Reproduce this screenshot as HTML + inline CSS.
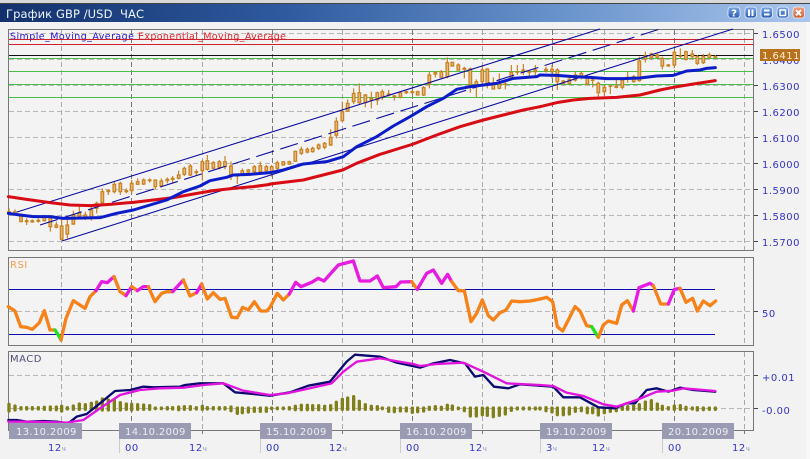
<!DOCTYPE html>
<html><head><meta charset="utf-8"><style>
html,body{margin:0;padding:0;background:#f2f2f2;width:810px;height:459px;overflow:hidden}
svg{display:block}
text{font-family:"DejaVu Sans","Noto Sans CJK SC",sans-serif}
.ax{font-size:10px;fill:#3434c8;letter-spacing:.5px}
.dt{font-size:10px;fill:#eeeef4;letter-spacing:.35px}
.ch{font-size:7px;fill:#8a8ad0}
.w{fill:none;stroke:#c8801e;stroke-width:3.5}
.b{fill:#e6b676;stroke:#c8801e;stroke-width:3.5}
.l{fill:none;stroke-linejoin:round;stroke-linecap:round}
.o{stroke:#f5831a;stroke-width:10}.m{stroke:#e81ce0;stroke-width:10}.g{stroke:#20e020;stroke-width:10}
.h{fill:none;stroke:#80801a;stroke-width:10;stroke-linecap:round}
.gv{stroke-width:1;stroke-dasharray:5 3}
</style></head><body>
<svg width="810" height="459" viewBox="0 0 810 459" xmlns="http://www.w3.org/2000/svg">
<defs>
<linearGradient id="tb" x1="0" x2="1" y1="0" y2="0"><stop offset="0" stop-color="#12316c"/><stop offset=".35" stop-color="#2f5a9e"/><stop offset=".7" stop-color="#6a94cc"/><stop offset="1" stop-color="#aac6ec"/></linearGradient>
<linearGradient id="bb" x1="0" x2="0" y1="0" y2="1"><stop offset="0" stop-color="#7aa6e6"/><stop offset="1" stop-color="#2a5cb0"/></linearGradient>
<linearGradient id="br" x1="0" x2="0" y1="0" y2="1"><stop offset="0" stop-color="#f0a080"/><stop offset="1" stop-color="#d05a30"/></linearGradient>
</defs>
<rect width="810" height="459" fill="#f2f2f2"/>
<rect width="810" height="3" fill="#d8d8d8"/>
<rect y="3" width="810" height="1" fill="#444"/>
<rect y="4" width="810" height="18" fill="url(#tb)"/>
<text x="6" y="18" font-size="11.5" fill="#f0f4fa" textLength="138" xml:space="preserve">График GBP /USD  ЧАС</text>
<rect x="806" y="22" width="4" height="437" fill="#f8f8f8"/>
<g stroke="#e8f0ff" stroke-width=".8">
<rect x="728" y="7" width="12" height="11" rx="3" fill="url(#bb)"/><rect x="745" y="7" width="11.500" height="11" rx="3" fill="url(#bb)"/><rect x="761" y="7" width="11.500" height="11" rx="3" fill="url(#bb)"/><rect x="777" y="7" width="11.500" height="11" rx="3" fill="url(#bb)"/><rect x="793" y="7" width="11.500" height="11" rx="3" fill="url(#br)"/>
</g>
<text x="734" y="16.500" font-size="10" font-weight="bold" fill="#fff" text-anchor="middle">?</text>
<path d="M749 9.500v6.500M752.500 9.500v6.500M764 10.500h5.500M764 14.500h5.500M796 10l5 5.500M801 10l-5 5.500" stroke="#fff" stroke-width="2" fill="none"/>
<rect x="780" y="10" width="5.500" height="5.500" fill="none" stroke="#fff" stroke-width="1.500"/>

<!-- panels -->
<rect x="8.500" y="29.500" width="745" height="221" fill="#f3f3f3" stroke="#777"/>
<rect x="8.500" y="257.500" width="745" height="88" fill="#f3f3f3" stroke="#777"/>
<rect x="8.500" y="351.500" width="745" height="79" fill="#f3f3f3" stroke="#777"/>

<!-- grid -->
<g stroke="#b8b8b8" stroke-dasharray="5 3">
<path d="M9 33.500H753M9 59.500H753M9 85.500H753M9 111.500H753M9 137.500H753M9 163.500H753M9 189.500H753M9 215.500H753M9 241.500H753M9 311.500H753M9 375.500H753M9 408.500H753"/>
</g>
<g stroke="#aaa" class="gv"><path d="M61.500 30V250M202.500 30V250M342.500 30V250M482.500 30V250M604.500 30V250M744.500 30V250M61.500 258V345M202.500 258V345M342.500 258V345M482.500 258V345M604.500 258V345M744.500 258V345M61.500 352V430M202.500 352V430M342.500 352V430M482.500 352V430M604.500 352V430M744.500 352V430"/></g>
<g stroke="#777" class="gv"><path d="M131.500 30V250M272.500 30V250M412.500 30V250M552.500 30V250M674.500 30V250M131.500 258V345M272.500 258V345M412.500 258V345M552.500 258V345M674.500 258V345M131.500 352V430M272.500 352V430M412.500 352V430M552.500 352V430M674.500 352V430"/></g>

<text x="10" y="39.500" font-size="9.500" fill="#2a14d0" textLength="124">Simple_Moving_Average</text>
<text x="138" y="39.500" font-size="9.500" fill="#e0242c" textLength="148">Exponential_Moving_Average</text>

<!-- level lines -->
<rect x="9" y="39" width="744" height="1" fill="#d0202c"/>
<rect x="9" y="44" width="744" height="1" fill="#d0202c"/>
<rect x="9" y="58" width="744" height="1" fill="#48c048"/>
<rect x="9" y="71" width="744" height="1" fill="#48c048"/>
<rect x="9" y="84" width="744" height="1" fill="#48c048"/>
<rect x="9" y="97" width="744" height="1" fill="#48c048"/>
<rect x="9" y="55" width="744" height="1" fill="#111"/>

<!-- candles z4 -->
<g transform="translate(0,150) scale(.33333)">
<path class="w" d="M27 175V195M45 178V195M63 190V215M80 205V225M97 208V218M115 205V218M133 195V215M151 198V245M169 215V235M185 205V272M202 205V265M220 182V225M238 170V205M256 185V210M274 170V212M290 155V190M307 115V165M325 118V135M343 95V130M361 95V135M379 115V130M395 90V132M413 85V105M431 85V105M449 85V98M466 90V118M484 85V112M502 82V100M518 78V98M536 62V88M553 50V78M571 42V78M589 58V78M607 30V92M622 15V62M640 33V58M658 30V58M675 18V58M693 35V90M712 72V102M727 55V75M745 57V70M763 45V70M781 35V70M799 45V70"/>
<path class="b" d="M23 185h8v5h-8zM41 185h8v5h-8zM59 195h8v20h-8zM76 212h8v3h-8zM93 212h8v4h-8zM111 211h8v3h-8zM129 202h8v10h-8zM147 205h8v25h-8zM165 225h8v7h-8zM181 228h8v40h-8zM198 225h8v27h-8zM216 195h8v27h-8zM234 188h8v10h-8zM252 195h8v10h-8zM270 180h8v25h-8zM286 160h8v15h-8zM303 125h8v33h-8zM321 122h8v3h-8zM339 103h8v22h-8zM357 100h8v25h-8zM375 122h8v3h-8zM391 100h8v22h-8zM409 95h8v8h-8zM427 90h8v12h-8zM445 90h8v2h-8zM462 90h8v20h-8zM480 93h8v15h-8zM498 88h8v4h-8zM514 85h8v3h-8zM532 75h8v10h-8zM549 55h8v18h-8zM567 48h8v27h-8zM585 65h8v3h-8zM603 35h8v27h-8zM618 32h8v26h-8zM636 38h8v17h-8zM654 35h8v17h-8zM671 35h8v15h-8zM689 48h8v30h-8zM708 75h8v3h-8zM723 62h8v10h-8zM741 60h8v6h-8zM759 50h8v15h-8zM777 47h8v18h-8zM795 50h8v12h-8z"/>
</g>
<!-- candles z3 -->
<g transform="translate(270,20) scale(.33333)">
<path class="w" d="M5 435V470M22 422V455M40 423V437M58 422V435M76 392V426M94 380V405M112 382V400M128 380V398M146 370V390M164 366V388M182 328V378M199 292V355M217 245V305M233 238V275M251 205V252M268 190V252M286 222V262M304 215V265M322 215V255M337 208V240M356 210V230M373 225V242M391 215V235M409 212V222M427 208V222M443 212V225M461 198V228M478 155V205M496 155V172M514 150V175M532 112V175M547 125V140M565 130V152M583 140V175M601 143V218M619 178V232M637 135V195M652 145V205M670 172V208M688 160V208M706 185V208M724 135V180M742 135V165M760 132V165M778 150V170M796 135V170"/>
<path class="b" d="M1 440h8v15h-8zM18 428h8v17h-8zM36 425h8v10h-8zM54 425h8v7h-8zM72 394h8v30h-8zM90 388h8v12h-8zM108 388h8v8h-8zM124 385h8v10h-8zM142 375h8v10h-8zM160 370h8v12h-8zM178 352h8v23h-8zM195 304h8v42h-8zM213 275h8v27h-8zM229 250h8v23h-8zM247 220h8v25h-8zM264 218h8v30h-8zM282 225h8v23h-8zM300 235h8v5h-8zM318 218h8v22h-8zM333 215h8v17h-8zM352 222h8v3h-8zM369 228h8v2h-8zM387 218h8v14h-8zM405 215h8v3h-8zM423 215h8v3h-8zM439 215h8v10h-8zM457 203h8v22h-8zM474 165h8v27h-8zM492 157h8v5h-8zM510 155h8v17h-8zM528 128h8v42h-8zM543 127h8v11h-8zM561 135h8v15h-8zM579 145h8v3h-8zM597 147h8v48h-8zM615 185h8v15h-8zM633 150h8v35h-8zM648 147h8v43h-8zM666 192h8v15h-8zM684 192h8v13h-8zM702 192h8v1h-8zM720 157h8v18h-8zM738 155h8v2h-8zM756 150h8v2h-8zM774 155h8v2h-8zM792 150h8v5h-8z"/>
</g>
<!-- candles z2 -->
<g transform="translate(540,0) scale(.33333)">
<path class="w" d="M18 200V218M36 195V235M52 205V270M70 240V255M88 232V255M106 215V245M124 215V238M142 225V255M158 235V262M175 245V290M193 255V288M211 255V282M229 240V265M247 235V268M263 215V248M281 225V248M298 170V245M316 155V188M334 158V180M352 160V175M367 170V208M385 192V200M403 150V205M421 145V175M438 152V182M457 150V178M472 165V195M490 162V192M508 158V175M526 165V175"/>
<path class="b" d="M14 208h8v4h-8zM32 208h8v7h-8zM48 210h8v35h-8zM66 243h8v7h-8zM84 238h8v12h-8zM102 225h8v15h-8zM120 220h8v12h-8zM138 230h8v22h-8zM154 240h8v1h-8zM171 250h8v28h-8zM189 262h8v13h-8zM207 258h8v1h-8zM225 258h8v4h-8zM243 240h8v22h-8zM259 232h8v3h-8zM277 230h8v15h-8zM294 183h8v59h-8zM312 168h8v10h-8zM330 162h8v10h-8zM348 165h8v7h-8zM363 175h8v23h-8zM381 195h8v3h-8zM399 157h8v38h-8zM417 168h8v1h-8zM434 155h8v23h-8zM453 162h8v8h-8zM468 170h8v20h-8zM486 170h8v18h-8zM504 165h8v7h-8zM522 170h8v2h-8z"/>
</g>

<!-- channel -->
<g fill="none" stroke="#0c0ca0" stroke-width="1.100">
<path d="M17 212L600 29"/>
<path d="M62 241L733 29"/>
<path d="M40 225L660 29" stroke-dasharray="18.500 6.700"/>
</g>

<!-- SMA -->
<g transform="translate(0,150) scale(.33333)"><polyline class="l" stroke="#d80c14" stroke-width="9" points="25,140 80,148 150,158 210,165 270,167 330,163 400,157 460,150 520,143 580,132 640,122 700,115 760,110 810,103"/></g>
<g transform="translate(270,20) scale(.33333)"><polyline class="l" stroke="#d80c14" stroke-width="9" points="0,492 100,480 218,450 260,430 330,403 430,372 500,345 570,320 640,300 700,285 760,270 810,260"/></g>
<g transform="translate(540,0) scale(.33333)"><polyline class="l" stroke="#d80c14" stroke-width="9" points="0,320 50,308 100,300 150,295 230,292 300,285 360,270 400,262 460,252 526,242"/></g>
<g transform="translate(0,150) scale(.33333)"><polyline class="l" stroke="#0c1cc8" stroke-width="9" points="25,190 60,195 100,200 150,200 190,205 250,204 300,203 350,190 400,180 450,165 500,150 550,125 600,108 630,92 680,82 700,75 750,73 810,68"/></g>
<g transform="translate(270,20) scale(.33333)"><polyline class="l" stroke="#0c1cc8" stroke-width="9" points="0,458 40,450 100,432 170,425 220,410 260,380 320,350 370,318 420,290 470,260 520,235 560,208 600,200 640,195 680,190 730,175 800,170 810,165"/></g>
<g transform="translate(540,0) scale(.33333)"><polyline class="l" stroke="#0c1cc8" stroke-width="9" points="0,225 50,226 100,230 150,232 200,236 250,236 300,234 350,228 400,226 440,213 480,210 500,205 526,203"/></g>

<!-- axis labels main -->
<path d="M754 33.500h4M754 85.500h4M754 111.500h4M754 137.500h4M754 163.500h4M754 189.500h4M754 215.500h4M754 241.500h4M754 311.500h4M754 375.500h4M754 408.500h4" stroke="#444"/>
<g class="ax">
<text x="762" y="38">1.6500</text><text x="762" y="64">1.6400</text><text x="762" y="90">1.6300</text><text x="762" y="116">1.6200</text><text x="762" y="142">1.6100</text><text x="762" y="168">1.6000</text><text x="762" y="194">1.5900</text><text x="762" y="220">1.5800</text><text x="762" y="246">1.5700</text>
<text x="762" y="317">50</text><text x="762" y="381">+0.01</text><text x="762" y="414">-0.00</text>
</g>
<rect x="760" y="49" width="40" height="12" fill="#b8721e"/>
<text x="762" y="59" font-size="10" fill="#ffeccc" letter-spacing=".5">1.6411</text>

<!-- RSI -->
<text x="10" y="268" font-size="10" fill="#f0a050" letter-spacing=".5">RSI</text>
<rect x="9" y="289" width="706" height="1" fill="#0c0cb0"/>
<rect x="9" y="334" width="706" height="1" fill="#0c0cb0"/>
<g transform="translate(0,250) scale(.33333)">
<polyline class="l o" points="25,170 45,183 62,230 80,232 97,238 118,218 133,182 150,240 165,240"/>
<polyline class="l g" points="165,240 175,255 183,270"/>
<polyline class="l o" points="183,270 198,205 220,152 255,175 270,140 288,122"/>
<polyline class="l m" points="288,122 305,95 322,98 342,80"/>
<polyline class="l o" points="342,80 360,125 378,137"/>
<polyline class="l m" points="378,137 395,110"/>
<polyline class="l o" points="395,110 412,122"/>
<polyline class="l m" points="412,122 430,110 445,110"/>
<polyline class="l o" points="445,110 465,155 485,130 500,125 518,125"/>
<polyline class="l m" points="518,125 550,90"/>
<polyline class="l o" points="550,90 570,138 590,128"/>
<polyline class="l m" points="590,128 605,102"/>
<polyline class="l o" points="605,102 622,147 640,128 660,148 675,145 695,202 712,203 728,172 745,180 763,155 782,183 800,183 810,172"/>
</g>
<g transform="translate(270,250) scale(.33333)">
<polyline class="l o" points="0,172 22,130 40,150 58,132"/>
<polyline class="l m" points="58,132 77,97 93,110 125,97 145,85 162,93 205,45 250,33 270,93 300,93 322,78 340,113 378,110 392,96 425,95"/>
<polyline class="l o" points="425,95 442,118"/>
<polyline class="l m" points="442,118 470,70 490,60 515,100 533,73 545,95"/>
<polyline class="l o" points="545,95 565,122 583,122 603,215 620,190 637,150 655,197 670,210 690,188 708,180 725,153 750,155 780,153 810,147"/>
</g>
<g transform="translate(540,250) scale(.33333)">
<polyline class="l o" points="0,147 20,142 38,155 52,230 68,243 85,210 105,170 120,183 140,227 155,230"/>
<polyline class="l g" points="155,230 175,262"/>
<polyline class="l o" points="175,262 190,225 205,213 230,220 245,165 262,152 280,183"/>
<polyline class="l m" points="280,183 297,113 330,100 340,107"/>
<polyline class="l o" points="340,107 362,162 385,162"/>
<polyline class="l m" points="385,162 403,118 420,115"/>
<polyline class="l o" points="420,115 438,157 458,145 472,183 490,153 510,167 527,153"/>
</g>

<!-- MACD -->
<text x="10" y="362" font-size="10" fill="#505078" letter-spacing=".5">MACD</text>
<g transform="translate(0,340) scale(.33333)">
<path class="h" d="M27 193V213M45 198V210M63 203V207M80 203V207M97 203V207M115 203V207M133 202V208M151 201V209M169 201V209M185 199V213M202 203V207M220 198V208M238 192V208M256 194V208M274 190V208M290 186V210M307 177V210M325 180V210M343 180V210M361 188V210M379 192V208M395 193V210M413 194V208M431 195V208M449 197V208M466 204V206M484 204V206M502 203V207M518 203V207M536 201V209M553 200V208M571 200V208M589 203V207M607 199V208M622 203V207M640 203V207M658 203V207M675 203V207M693 201V212M712 204V220M727 204V218M745 204V216M763 204V214M781 204V214M799 204V214"/>
<polyline class="l" stroke="#0a0a70" stroke-width="7" points="25,240 50,240 80,245 130,243 170,245 205,250 230,230 260,222 300,190 345,153 390,150 430,140 460,142 540,140 555,135 600,130 670,130 705,157 760,162 810,167"/>
<polyline class="l" stroke="#e014dc" stroke-width="7" points="25,245 80,245 170,247 200,248 250,240 300,205 360,165 420,150 480,145 550,143 610,135 670,130 730,152 810,165"/>
</g>
<g transform="translate(270,340) scale(.33333)">
<path class="h" d="M5 204V206M22 204V206M40 204V206M58 203V207M76 199V209M94 196V209M112 196V209M128 197V209M146 197V209M164 199V209M182 197V209M199 187V209M217 178V208M233 174V208M251 170V208M268 184V208M286 194V208M304 199V208M322 200V208M337 204V206M356 204V214M373 204V215M391 204V213M409 204V213M427 204V217M443 204V215M461 204V213M478 202V208M496 200V208M514 202V208M532 196V208M547 198V208M565 204V206M583 204V212M601 204V228M619 204V228M637 204V224M652 204V226M670 204V230M688 204V226M706 204V222M724 204V211M742 204V207M760 204V207M778 204V207M796 204V207"/>
<polyline class="l" stroke="#0a0a70" stroke-width="7" points="0,167 60,157 115,137 180,125 230,65 255,44 330,50 380,68 450,83 490,70 540,60 585,70 615,110 640,105 672,140 715,145 750,133 810,137"/>
<polyline class="l" stroke="#e014dc" stroke-width="7" points="0,165 50,160 110,147 185,130 220,95 260,65 330,55 430,72 450,78 500,72 580,68 640,95 710,130 810,135"/>
</g>
<g transform="translate(540,340) scale(.33333)">
<path class="h" d="M0 204V207M18 203V212M36 204V216M52 204V224M70 204V224M88 204V222M106 204V214M124 204V212M142 204V218M158 204V218M175 204V225M193 204V218M211 204V214M229 204V212M247 202V208M263 200V208M281 199V208M298 194V208M316 186V208M334 182V208M352 192V208M367 199V208M385 203V207M403 198V208M421 197V208M438 202V208M457 204V207M472 203V210M490 204V209M508 204V208M526 204V208"/>
<polyline class="l" stroke="#0a0a70" stroke-width="7" points="0,137 40,140 70,172 120,172 175,202 225,205 260,190 285,190 320,150 350,145 385,155 420,143 460,150 526,155"/>
<polyline class="l" stroke="#e014dc" stroke-width="7" points="0,135 40,138 80,158 130,168 190,193 230,200 290,180 350,155 400,152 430,145 526,153"/>
</g>

<!-- date boxes -->
<g fill="#9a9ab2">
<rect x="9" y="423" width="73" height="16"/><rect x="119" y="423" width="72" height="16"/><rect x="260" y="423" width="72" height="16"/><rect x="400" y="423" width="72" height="16"/><rect x="540" y="423" width="72" height="16"/><rect x="662" y="423" width="72" height="16"/>
</g>
<path d="M119.500 439v14M260.500 439v14M400.500 439v14M540.500 439v14M662.500 439v14" stroke="#ccc"/>
<path d="M61.500 431v3M202.500 431v3M342.500 431v3M482.500 431v3M604.500 431v3M744.500 431v3" stroke="#777"/>
<g class="dt">
<text x="16" y="435">13.10.2009</text><text x="125" y="435">14.10.2009</text><text x="266" y="435">15.10.2009</text><text x="406" y="435">16.10.2009</text><text x="546" y="435">19.10.2009</text><text x="668" y="435">20.10.2009</text>
</g>
<g class="ax">
<text x="48" y="451">12<tspan class="ch">ч</tspan></text>
<text x="125" y="451">00</text>
<text x="189" y="451">12<tspan class="ch">ч</tspan></text>
<text x="266" y="451">00</text>
<text x="329" y="451">12<tspan class="ch">ч</tspan></text>
<text x="406" y="451">00</text>
<text x="469" y="451">12<tspan class="ch">ч</tspan></text>
<text x="546" y="451">3<tspan class="ch">ч</tspan></text>
<text x="592" y="451">12<tspan class="ch">ч</tspan></text>
<text x="668" y="451">00</text>
<text x="732" y="451">12<tspan class="ch">ч</tspan></text>
</g>
</svg>
</body></html>
